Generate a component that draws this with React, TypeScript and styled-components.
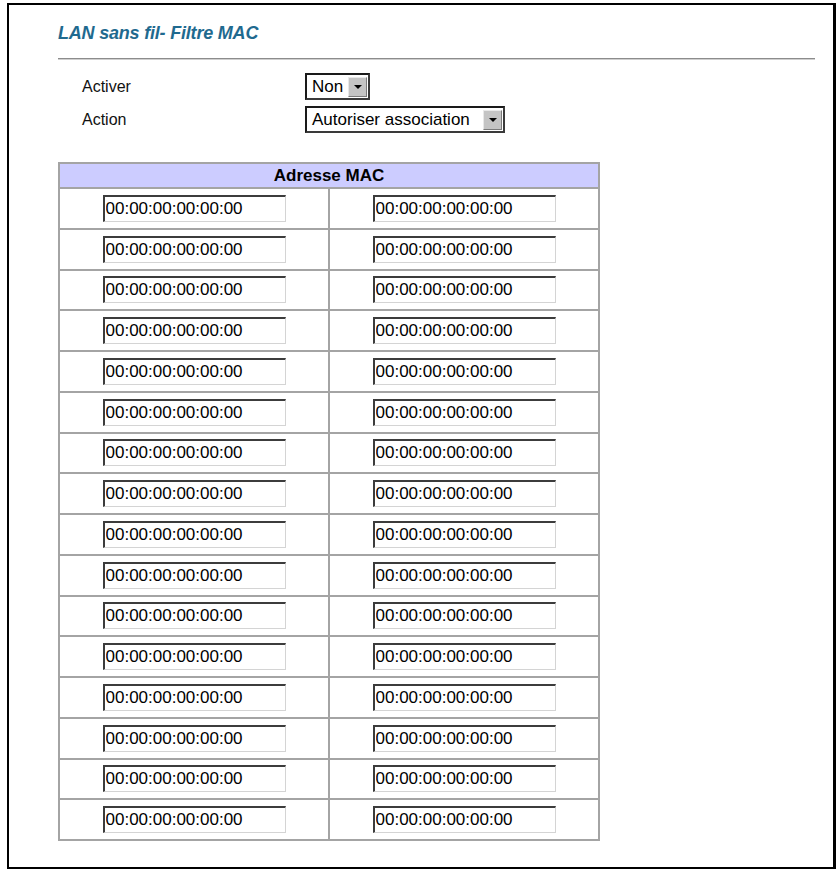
import React from 'react'
import styled, { createGlobalStyle } from 'styled-components'

const GlobalStyle = createGlobalStyle`
  body {
    margin: 0;
    background: #ffffff;
    font-family: "Liberation Sans", Arial, sans-serif;
  }
`

const ROWS = 16
const EMPTY_MAC = '00:00:00:00:00:00'

const App: React.FC = () => {
  const rows = Array.from({ length: ROWS }, (_, i) => i)

  return (
    <>
      <GlobalStyle />
      <Frame>
        <Title>LAN sans fil- Filtre MAC</Title>
        <Rule />
        <Form>
          <FieldRow>
            <Label>Activer</Label>
            <Select width={65}>
              <SelectText>Non</SelectText>
              <ArrowButton />
            </Select>
          </FieldRow>
          <FieldRow>
            <Label>Action</Label>
            <Select width={200}>
              <SelectText>Autoriser association</SelectText>
              <ArrowButton />
            </Select>
          </FieldRow>
        </Form>
        <MacTable>
          <thead>
            <tr>
              <HeaderCell colSpan={2}>Adresse MAC</HeaderCell>
            </tr>
          </thead>
          <tbody>
            {rows.map(i => (
              <MacRow key={i}>
                <MacCell>
                  <MacInput defaultValue={EMPTY_MAC} />
                </MacCell>
                <MacCell>
                  <MacInput defaultValue={EMPTY_MAC} />
                </MacCell>
              </MacRow>
            ))}
          </tbody>
        </MacTable>
      </Frame>
    </>
  )
}

interface SelectProps {
  width: number
}

const Frame = styled.div`
  box-sizing: border-box;
  margin: 3px 0 0 7px;
  width: 829px;
  height: 866px;
  border: 2px solid #000000;
  border-right-width: 3px;
  padding: 18px 0 0 49px;
`

const Title = styled.h1`
  margin: 0;
  font-size: 18px;
  line-height: 21px;
  font-weight: bold;
  font-style: italic;
  color: #1f6a8f;
  letter-spacing: -0.2px;
`

const Rule = styled.div`
  margin-top: 14px;
  width: 757px;
  height: 1px;
  background: #8c8c8c;
  border-bottom: 1px solid #cfcfcf;
`

const Form = styled.div`
  margin-top: 13px;
  display: flex;
  flex-direction: column;
  gap: 6px;
  padding-left: 24px;
`

const FieldRow = styled.div`
  display: flex;
  align-items: center;
  height: 27px;
`

const Label = styled.span`
  width: 223px;
  font-size: 16px;
  color: #111111;
`

const Select = styled.div<SelectProps>`
  box-sizing: border-box;
  display: flex;
  align-items: center;
  justify-content: space-between;
  width: ${props => props.width}px;
  height: 27px;
  border-top: 2px solid #1a1a1a;
  border-left: 2px solid #1a1a1a;
  border-bottom: 2px solid #3a3a3a;
  border-right: 2px solid #3a3a3a;
  background: #ffffff;
  padding: 0 1px 0 5px;
`

const SelectText = styled.span`
  font-size: 17px;
  color: #000000;
  white-space: nowrap;
`

const ArrowButton = styled.span`
  position: relative;
  width: 19px;
  height: 20px;
  background: #c4c4c4;
  border-top: 1px solid #e8e8e8;
  border-left: 1px solid #e8e8e8;
  border-bottom: 1px solid #7a7a7a;
  border-right: 1px solid #7a7a7a;
  box-sizing: border-box;

  &::after {
    content: '';
    position: absolute;
    left: 5px;
    top: 7px;
    border-left: 4px solid transparent;
    border-right: 4px solid transparent;
    border-top: 4px solid #000000;
  }
`

const MacTable = styled.table`
  margin-top: 29px;
  width: 542px;
  border-collapse: collapse;
  border: 2px solid #a4a4a4;
`

const HeaderCell = styled.th`
  height: 23px;
  padding: 0;
  background: #ccccff;
  border: 2px solid #a4a4a4;
  font-size: 17px;
  font-weight: bold;
  color: #000000;
  text-align: center;
`

const MacRow = styled.tr`
  height: 40.75px;
`

const MacCell = styled.td`
  width: 50%;
  padding: 0;
  border: 2px solid #a4a4a4;
  text-align: center;
  vertical-align: middle;
`

const MacInput = styled.input`
  box-sizing: border-box;
  width: 183px;
  height: 27px;
  margin: 0;
  padding: 0 0 0 1px;
  font-family: "Liberation Sans", Arial, sans-serif;
  font-size: 17px;
  color: #000000;
  background: #ffffff;
  border-top: 2px solid #3c3c3c;
  border-left: 2px solid #3c3c3c;
  border-bottom: 1px solid #d4d4d4;
  border-right: 1px solid #d4d4d4;
  outline: none;
`

export default App
